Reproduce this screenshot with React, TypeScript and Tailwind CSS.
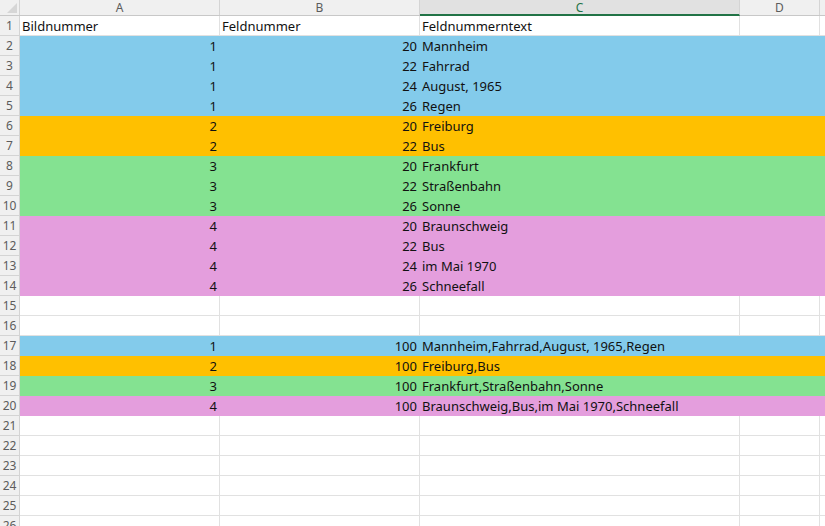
import React from 'react'

// ── Data ─────────────────────────────────────────────────────────────────────

type Row = { a?: string; b?: string; c?: string; fill?: string; header?: boolean }

const BLUE = 'bg-[#83cbeb]'
const ORANGE = 'bg-[#ffc000]'
const GREEN = 'bg-[#84e291]'
const PINK = 'bg-[#e49edd]'

const ROWS: Row[] = [
  { a: 'Bildnummer', b: 'Feldnummer', c: 'Feldnummerntext', header: true },
  { a: '1', b: '20', c: 'Mannheim', fill: BLUE },
  { a: '1', b: '22', c: 'Fahrrad', fill: BLUE },
  { a: '1', b: '24', c: 'August, 1965', fill: BLUE },
  { a: '1', b: '26', c: 'Regen', fill: BLUE },
  { a: '2', b: '20', c: 'Freiburg', fill: ORANGE },
  { a: '2', b: '22', c: 'Bus', fill: ORANGE },
  { a: '3', b: '20', c: 'Frankfurt', fill: GREEN },
  { a: '3', b: '22', c: 'Straßenbahn', fill: GREEN },
  { a: '3', b: '26', c: 'Sonne', fill: GREEN },
  { a: '4', b: '20', c: 'Braunschweig', fill: PINK },
  { a: '4', b: '22', c: 'Bus', fill: PINK },
  { a: '4', b: '24', c: 'im Mai 1970', fill: PINK },
  { a: '4', b: '26', c: 'Schneefall', fill: PINK },
  {},
  {},
  { a: '1', b: '100', c: 'Mannheim,Fahrrad,August, 1965,Regen', fill: BLUE },
  { a: '2', b: '100', c: 'Freiburg,Bus', fill: ORANGE },
  { a: '3', b: '100', c: 'Frankfurt,Straßenbahn,Sonne', fill: GREEN },
  { a: '4', b: '100', c: 'Braunschweig,Bus,im Mai 1970,Schneefall', fill: PINK },
  {},
  {},
  {},
  {},
  {},
  {},
]

const COLS = [
  { key: 'A', w: 'w-[200px]' },
  { key: 'B', w: 'w-[200px]' },
  { key: 'C', w: 'w-[320px]', active: true },
  { key: 'D', w: 'w-[80px]' },
]

// ── Pieces ───────────────────────────────────────────────────────────────────

function ColumnHeaders() {
  return (
    <div className="flex h-[16px] shrink-0 border-b border-[#c8c8c8] bg-[#f0f0f0] text-[12px] leading-[15px] text-[#5c5c5c]">
      <div className="relative w-[20px] shrink-0 border-r border-[#d4d4d4]">
        <div className="absolute bottom-[2px] right-[2px] h-0 w-0 border-b-[10px] border-l-[10px] border-b-[#d6d6d6] border-l-transparent" />
      </div>
      {COLS.map((c) => (
        <div
          key={c.key}
          className={
            c.active
              ? `${c.w} shrink-0 border-r border-[#d4d4d4] border-b-2 border-b-[#217346] bg-[#e1e1e1] text-center text-[#217346] -mb-px`
              : `${c.w} shrink-0 border-r border-[#d4d4d4] text-center`
          }
        >
          {c.key}
        </div>
      ))}
      <div className="flex-1" />
    </div>
  )
}

function SheetRow({ row, index }: { row: Row; index: number }) {
  const cell = (extra: string) =>
    `${extra} shrink-0 overflow-visible whitespace-nowrap pl-[2px] pr-[3px] ${row.fill ? '' : 'border-r border-[#e1e1e1]'}`

  return (
    <div className="flex h-[20px] shrink-0">
      <div className="w-[20px] shrink-0 border-r border-b border-[#d4d4d4] bg-[#f0f0f0] text-center text-[12px] leading-[20px] text-[#5c5c5c]">
        {index + 1}
      </div>
      <div
        className={`flex flex-1 text-[13px] leading-[20px] text-[#111] ${
          row.fill ? row.fill : 'border-b border-[#e1e1e1] bg-white'
        }`}
      >
        <div className={cell(`w-[200px] ${row.header ? 'text-left' : 'text-right'}`)}>{row.a}</div>
        <div className={cell(`w-[200px] ${row.header ? 'text-left' : 'text-right'}`)}>{row.b}</div>
        <div className={cell('w-[320px] text-left')}>{row.c}</div>
        <div className={cell('w-[80px]')} />
        <div className="flex-1" />
      </div>
    </div>
  )
}

// ── Page ─────────────────────────────────────────────────────────────────────

export default function App() {
  return (
    <div
      className="flex h-[526px] w-[825px] flex-col overflow-hidden bg-white"
      style={{ fontFamily: '"Noto Sans", "Liberation Sans", sans-serif' }}
    >
      <ColumnHeaders />
      {ROWS.map((row, i) => (
        <SheetRow key={i} row={row} index={i} />
      ))}
    </div>
  )
}
